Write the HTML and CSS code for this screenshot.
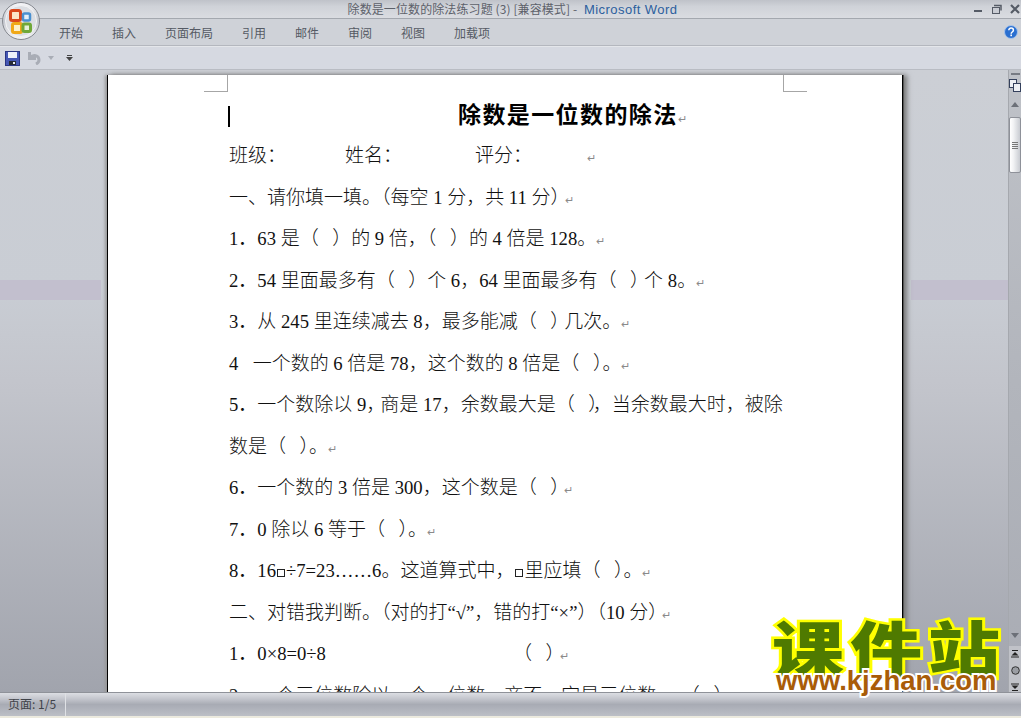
FILE: index.html
```html
<!DOCTYPE html>
<html lang="zh-CN">
<head>
    <meta charset="UTF-8">
    <title>除数是一位数的除法练习题</title>
    <link rel="stylesheet" href="styles.css">
</head>
<body>
<div class="app">
    <!-- Office button -->
    <svg class="office-btn" width="40" height="40" viewBox="0 0 40 40">
        <defs>
            <linearGradient id="orb" x1="0" y1="0" x2="0" y2="1">
                <stop offset="0" stop-color="#f8f8fa"/>
                <stop offset="0.5" stop-color="#c4c7ce"/>
                <stop offset="1" stop-color="#f6f6f8"/>
            </linearGradient>
        </defs>
        <circle cx="20" cy="20" r="18.5" fill="url(#orb)" stroke="#85888f"/>
        <circle cx="20" cy="20" r="15.500" fill="#dcdee3" stroke="#f4f4f6"/>
        <rect x="9.500" y="9.500" width="10" height="10" rx="2" fill="#fbe6c8" stroke="#d9481c" stroke-width="3"/>
        <rect x="22" y="12.500" width="7" height="7" rx="1.500" fill="#e4eef8" stroke="#4a90d0" stroke-width="2.500"/>
        <rect x="11.500" y="22.500" width="9" height="9" rx="1.500" fill="#fdf0c8" stroke="#f0a818" stroke-width="3"/>
        <rect x="22" y="23" width="7.500" height="7.500" rx="1.500" fill="#e6f0d8" stroke="#70a838" stroke-width="3"/>
    </svg>

    <div class="titlebar">
        <div class="title-text">除数是一位数的除法练习题 (3) [兼容模式] - <span class="title-app">Microsoft Word</span></div>
        <div class="win-btns">
            <svg width="9" height="9" viewBox="0 0 9 9"><rect x="0" y="6" width="8" height="2" fill="#555b66"/></svg>
            <svg width="11" height="10" viewBox="0 0 11 10"><rect x="1.500" y="3.500" width="7" height="6" fill="#c9ccd3" stroke="#555b66"/><path d="M3 1.500h7v5" fill="none" stroke="#555b66" stroke-width="1.500"/></svg>
            <svg width="10" height="10" viewBox="0 0 10 10"><path d="M1 1l8 8M9 1l-8 8" stroke="#555b66" stroke-width="2.200"/></svg>
        </div>
    </div>

    <div class="tabs">
        <span>开始</span><span>插入</span><span>页面布局</span><span>引用</span><span>邮件</span><span>审阅</span><span>视图</span><span>加载项</span>
        <svg class="help" width="14" height="14" viewBox="0 0 14 14">
            <circle cx="7" cy="7" r="6.500" fill="#2a6fd0" stroke="#a8c4ea"/>
            <path d="M4.800 5.300c0-3 4.600-2.800 4.600-.1 0 1.800-2.200 1.800-2.200 3.500" fill="none" stroke="#fff" stroke-width="1.500"/>
            <rect x="6.400" y="9.500" width="1.600" height="1.700" fill="#fff"/>
        </svg>
    </div>

    <div class="qat">
        <svg width="15" height="15" viewBox="0 0 15 15">
            <rect x="0.500" y="0.500" width="14" height="14" fill="#4557b4" stroke="#2b3684"/>
            <rect x="3" y="1" width="9" height="6" fill="#eef1fa"/>
            <rect x="4" y="10" width="7" height="4" fill="#262a34"/>
            <rect x="8" y="11" width="2" height="2" fill="#e8ecf8"/>
        </svg>
        <svg class="qat-undo" width="14" height="13" viewBox="0 0 14 13">
            <path d="M1.500 0v6.500H8M2 6c3-4 9-3 9 2 0 2-1 3-3 4" fill="none" stroke="#a9adb6" stroke-width="3"/>
        </svg>
        <span class="arrow-gray"></span>
        <svg class="qat-more" width="7" height="6" viewBox="0 0 7 6"><path d="M1 .5h5" stroke="#444"/><path d="M0 2h7L3.500 6z" fill="#444"/></svg>
    </div>

    <div class="workspace">
        <div class="paper">
            <i class="crop crop-left"></i>
            <i class="crop crop-right"></i>
            <div class="line line-title"><i class="caret"></i><b class="doc-title">除数是一位数的除法</b><span class="mark">↵</span></div>
            <div class="line"><span class="field f1">班级：</span><span class="field f2">姓名：</span><span class="field f3">评分：</span><span class="mark">↵</span></div>
            <div class="line">一、请你填一填。（每空<span class="n"> 1 </span>分，共<span class="n"> 11 </span>分<span class="sq">）</span><span class="mark">↵</span></div>
            <div class="line"><span class="n">1．63 </span>是（<span class="n">  </span> ）的<span class="n"> 9 </span>倍，（<span class="n">  </span> ）的<span class="n"> 4 </span>倍是<span class="n"> 128</span>。<span class="mark">↵</span></div>
            <div class="line"><span class="n">2．54 </span>里面最多有（<span class="n">  </span> ）个<span class="n"> 6</span>，<span class="n">64 </span>里面最多有（<span class="n">  </span> <span class="sq">）</span>个<span class="n"> 8</span>。<span class="mark">↵</span></div>
            <div class="line"><span class="n">3．</span>从<span class="n"> 245 </span>里连续减去<span class="n"> 8</span>，最多能减（<span class="n">  </span> <span class="sq">）</span>几次。<span class="mark">↵</span></div>
            <div class="line"><span class="n">4 &nbsp;</span><span class="pad">一个数的</span><span class="n"> 6 </span>倍是<span class="n"> 78</span>，这个数的<span class="n"> 8 </span>倍是（<span class="n">  </span> ）。<span class="mark">↵</span></div>
            <div class="line"><span class="n">5．</span>一个数除以<span class="n"> 9</span><span class="sq">，</span>商是<span class="n"> 17</span>，余数最大是（<span class="n">  </span> <span class="sq">）</span>，当余数最大时，被除</div>
            <div class="line">数是（<span class="n">  </span> ）。<span class="mark">↵</span></div>
            <div class="line"><span class="n">6．</span>一个数的<span class="n"> 3 </span>倍是<span class="n"> 300</span>，这个数是（<span class="n">  </span> <span class="sq">）</span><span class="mark">↵</span></div>
            <div class="line"><span class="n">7．0 </span>除以<span class="n"> 6 </span>等于（<span class="n">  </span> ）。<span class="mark">↵</span></div>
            <div class="line"><span class="n">8．16<i class="box"></i>÷7=23……6</span>。这道算式中，<i class="box"></i>里应填（<span class="n">  </span> ）。<span class="mark">↵</span></div>
            <div class="line">二、对错我判断。（对的打<span class="n">“√”</span>，错的打<span class="n">“×”</span>）（<span class="n">10 </span>分<span class="sq">）</span><span class="mark">↵</span></div>
            <div class="line"><span class="n">1．0×8=0÷8</span><span class="answer">（<span class="n">  </span> <span class="sq">）</span></span><span class="mark">↵</span></div>
            <div class="line"><span class="n">2．</span>一个三位数除以一个一位数，商不一定是三位数。<span class="answer2">（<span class="n">  </span> ）</span></div>
        </div>

        <div class="scrollbar">
            <i class="split"></i>
            <svg class="ruler-btn" width="12" height="13" viewBox="0 0 12 13"><rect x="0.500" y="0.500" width="7" height="8" fill="#eef0f4" stroke="#34405c"/><rect x="4.500" y="4.500" width="7" height="8" fill="#eef0f4" stroke="#34405c"/></svg>
            <i class="arrow-up"></i>
            <div class="thumb"><i></i><i></i><i></i><i></i></div>
            <i class="arrow-down"></i>
            <div class="page-nav">
                <svg width="8" height="8" viewBox="0 0 8 8"><path d="M1 .5h6" stroke="#222"/><path d="M4 2L7.500 5.500H.5z" fill="#222"/><path d="M0 7h8" stroke="#222"/></svg>
                <svg width="9" height="9" viewBox="0 0 9 9"><circle cx="4.500" cy="4.500" r="3.800" fill="#9a9da3" stroke="#333"/></svg>
                <svg width="8" height="8" viewBox="0 0 8 8"><path d="M0 1h8" stroke="#222"/><path d="M4 6L.5 2.500h7z" fill="#222"/><path d="M1 7.500h6" stroke="#222"/></svg>
            </div>
        </div>
    </div>

    <div class="statusbar">
        <span class="status-page">页面: 1/5</span>
    </div>

    <!-- site watermark -->
    <div class="watermark">
        <div class="wm-name">课件站</div>
        <div class="wm-url">www.kjzhan.com</div>
    </div>
</div>
</body>
</html>
```

FILE: styles.css
```css
* {
    box-sizing: border-box;
}
html, body {
    margin: 0;
    height: 100%;
    overflow: hidden;
}
body {
    font-family: "Noto Sans CJK SC", sans-serif;
    background: #c8ccd3;
}
.app {
    position: relative;
    display: flex;
    flex-direction: column;
    height: 718px;
    overflow: hidden;
}
.office-btn {
    position: absolute;
    left: 1px;
    top: 1px;
    z-index: 2;
}

/* title bar */
.titlebar {
    flex: none;
    height: 19px;
    display: flex;
    justify-content: center;
    align-items: center;
    background: linear-gradient(#bfc2c9, #cfd2d8 35%, #dadce1);
    border-bottom: 1px solid #a4a8af;
    position: relative;
}
.title-text {
    font-size: 12px;
    line-height: 18px;
    color: #5d616a;
    white-space: nowrap;
    padding: 1px 0 0 4px;
    letter-spacing: 0.1px;
}
.title-app {
    margin-left: 4px;
    color: #2c5f9e;
    font-family: "Liberation Sans", sans-serif;
    font-size: 13px;
    letter-spacing: 0.45px;
}
.win-btns {
    position: absolute;
    right: 1px;
    top: 4px;
    display: flex;
    gap: 8px;
    align-items: flex-start;
}

/* tabs */
.tabs {
    flex: none;
    height: 27px;
    display: flex;
    align-items: center;
    gap: 29px;
    padding-left: 59px;
    font-size: 12px;
    color: #555a64;
    background: #cfd2d8;
    border-bottom: 1px solid #b4b7be;
}
.help {
    margin-left: auto;
    margin-right: 3px;
}

/* quick access toolbar */
.qat {
    flex: none;
    height: 24px;
    display: flex;
    align-items: center;
    padding-left: 5px;
    background: #d6d9e1;
    border-top: 1px solid #e4e6ea;
    border-bottom: 1px solid #b9bcc3;
}
.qat-undo {
    margin-left: 8px;
}
.arrow-gray {
    width: 0;
    height: 0;
    margin-left: 6px;
    border: 3px solid transparent;
    border-top: 4px solid #a9adb6;
    border-bottom: 0;
}
.qat-more {
    margin-left: 12px;
}

/* document area */
.workspace {
    flex: 1;
    min-height: 0;
    display: flex;
    overflow: hidden;
    padding-top: 5px;
    background:
        linear-gradient(transparent 210px, #c2bfce 210px, #c2bfce 230px, transparent 230px) 0 0 / 101px 100% no-repeat,
        linear-gradient(transparent 210px, #c2bfce 210px, #c2bfce 230px, transparent 230px) 911px 0 / 97px 100% no-repeat,
        linear-gradient(#cccfd5, #c9cdd4 35%, #c3c5cc 50%, #a1a4ad);
}
.paper {
    position: relative;
    flex: none;
    width: 796px;
    height: 700px;
    margin-left: 107px;
    padding: 19px 0 0 121px;
    background: #fff;
    border-left: 1px solid #000;
    border-right: 1px solid #000;
    box-shadow: 1px 0 0 #555, 4px 0 5px #777, -2px 0 3px #999;
    font-size: 19px;
    font-weight: 300;
    color: #111;
}
.crop {
    position: absolute;
    top: 0;
    width: 24px;
    height: 17px;
    border-bottom: 1px solid #a6a6a6;
}
.crop-left {
    left: 96px;
    border-right: 1px solid #a6a6a6;
}
.crop-right {
    left: 675px;
    border-left: 1px solid #a6a6a6;
}
.line {
    height: 41.5px;
    line-height: 41.5px;
    white-space: pre;
}
.line-title {
    height: 39px;
    line-height: 39px;
}
.caret {
    display: inline-block;
    width: 2px;
    height: 21px;
    margin-right: 228px;
    margin-left: -1px;
    background: #000;
    vertical-align: -4px;
}
.doc-title {
    font-size: 23px;
    font-weight: 700;
    letter-spacing: 1.4px;
    color: #000;
}
.n {
    font-family: "Liberation Serif", serif;
    font-size: 18.67px;
}
.mark {
    font-family: "DejaVu Sans", sans-serif;
    font-size: 11px;
    color: #8a8a8a;
}
/* Word squeezes some full-width punctuation */
.sq {
    letter-spacing: -5px;
}
.field {
    display: inline-block;
}
.f1 {
    width: 116px;
}
.f2 {
    width: 130px;
}
.f3 {
    width: 112px;
}
.pad {
    margin-left: 5px;
}
.box {
    display: inline-block;
    width: 8px;
    height: 8px;
    margin: 0 1px;
    border: 1px solid #222;
}
.answer {
    margin-left: 187px;
}
.answer2 {
    margin-left: 15px;
}

/* scrollbar */
.scrollbar {
    position: relative;
    flex: none;
    width: 13px;
    margin-left: auto;
    margin-top: -5px;
    display: flex;
    flex-direction: column;
    align-items: center;
    background: linear-gradient(#bfc2c8, #b2b5bc 50%, #a9acb4);
    border-left: 1px solid #a5a8ae;
}
.split {
    flex: none;
    width: 9px;
    height: 2px;
    margin-top: 3px;
    background: #777b83;
}
.ruler-btn {
    flex: none;
    margin-top: 4px;
}
.arrow-up {
    flex: none;
    width: 0;
    margin-top: 10px;
    border: 4px solid transparent;
    border-top: 0;
    border-bottom: 5px solid #6c7078;
}
.thumb {
    flex: none;
    width: 12px;
    height: 56px;
    margin-top: 10px;
    display: flex;
    flex-direction: column;
    justify-content: center;
    gap: 1px;
    padding: 0 2px;
    background: linear-gradient(90deg, #fff, #f1f2f4 35%, #c9ccd2);
    border: 1px solid #8e9199;
    border-radius: 2px;
}
.thumb i {
    height: 1px;
    background: #777;
}
.arrow-down {
    flex: none;
    width: 0;
    margin-top: 460px;
    border: 4px solid transparent;
    border-bottom: 0;
    border-top: 5px solid #6c7078;
}
.page-nav {
    flex: none;
    display: flex;
    flex-direction: column;
    align-items: center;
    gap: 8px;
    width: 100%;
    margin-top: 8px;
    padding-top: 4px;
    background: #c0c2c8;
    flex-grow: 1;
}

/* status bar */
.statusbar {
    flex: none;
    height: 26px;
    display: flex;
    align-items: center;
    font-size: 12px;
    color: #3f4249;
    border-top: 1px solid #8f9299;
    border-bottom: 2px solid #eceade;
    background: linear-gradient(#dcdee3, #c4c6cd 25%, #a8abb4 50%, #bcbfc6);
}
.status-page {
    width: 66px;
    height: 100%;
    line-height: 22px;
    padding-left: 8px;
    border-right: 1px solid #dfe1e5;
}

/* watermark */
.watermark {
    position: absolute;
    left: 772px;
    bottom: 23px;
    white-space: nowrap;
}
.wm-name {
    font-size: 60px;
    line-height: 54px;
    font-weight: 900;
    letter-spacing: 5px;
    color: #4f7a00;
    -webkit-text-stroke: 5px #ffff00;
    paint-order: stroke fill;
    transform: scaleX(1.2);
    transform-origin: left center;
}
.wm-url {
    position: relative;
    margin: -6px 0 0 4px;
    font-family: "Liberation Sans", sans-serif;
    font-size: 27.5px;
    line-height: 28px;
    font-weight: bold;
    color: #a95c08;
    -webkit-text-stroke: 4px #fff;
    paint-order: stroke fill;
}
```
